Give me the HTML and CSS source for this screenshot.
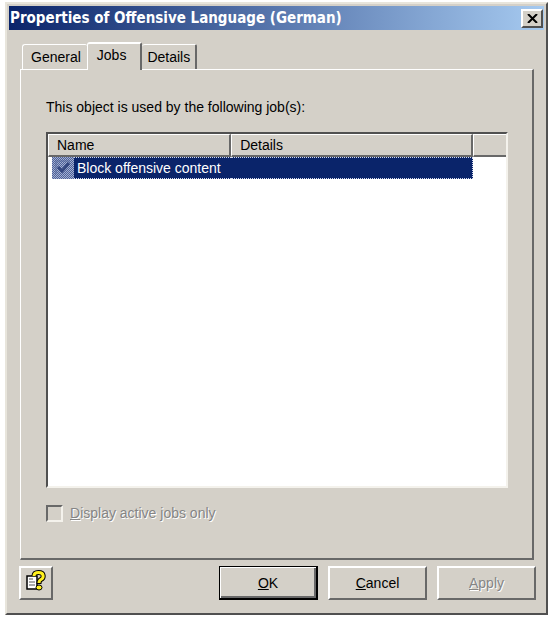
FILE: index.html
```
<!DOCTYPE html>
<html lang="en">
<head>
    <meta charset="UTF-8">
    <meta name="viewport" content="width=device-width, initial-scale=1.0">
    <title>Properties of Offensive Language (German)</title>
    <link rel="stylesheet" href="styles.css">
</head>
<body>
    <div class="window">
        <div class="titlebar">
            <h1>Properties of Offensive Language (German)</h1>
            <button class="close" aria-label="Close">
                <svg width="11" height="9" viewBox="0 0 11 9"><path d="M1 0L10 9M10 0L1 9" stroke="#000" stroke-width="2"/></svg>
            </button>
        </div>
        <div class="tabs" role="tablist">
            <button class="tab" role="tab">General</button>
            <button class="tab active" role="tab" aria-selected="true">Jobs</button>
            <button class="tab" role="tab">Details</button>
        </div>
        <div class="panel" role="tabpanel">
            <p>This object is used by the following job(s):</p>
            <div class="list">
                <table>
                    <colgroup>
                        <col class="col-name">
                        <col class="col-details">
                        <col class="col-rest">
                    </colgroup>
                    <thead>
                        <tr><th>Name</th><th>Details</th><th></th></tr>
                    </thead>
                    <tbody>
                        <tr class="selected">
                            <td>
                                <div class="item">
                                    <span class="item-icon">
                                        <svg width="22" height="22" viewBox="0 0 22 22">
                                            <defs>
                                                <pattern id="dither" width="2" height="2" patternUnits="userSpaceOnUse">
                                                    <rect width="2" height="2" fill="#a5b0cf"/>
                                                    <rect width="1" height="1" fill="#4c619b"/>
                                                    <rect x="1" y="1" width="1" height="1" fill="#4c619b"/>
                                                </pattern>
                                            </defs>
                                            <rect width="22" height="22" fill="url(#dither)"/>
                                            <path d="M4 17V4H18" fill="none" stroke="#5d6f9f" stroke-width="1"/>
                                            <path d="M6 10L10 14L17 6" fill="none" stroke="#34477f" stroke-width="3"/>
                                        </svg>
                                    </span>
                                    <span class="item-text">Block offensive content</span>
                                </div>
                            </td>
                            <td class="item-details"></td>
                            <td></td>
                        </tr>
                    </tbody>
                </table>
            </div>
            <div class="option">
                <input type="checkbox" id="activeOnly" disabled>
                <label for="activeOnly"><u>D</u>isplay active jobs only</label>
            </div>
        </div>
        <div class="footer">
            <button class="btn help" aria-label="Help">
                <svg width="20" height="22" viewBox="0 0 20 22">
                    <path d="M1 6H11V19H1Z" fill="#fff" stroke="#000" stroke-width="1.5"/>
                    <path d="M3 9H7M3 12H9M3 15H9" stroke="#555"/>
                    <path d="M8 6C8 3 10 2.5 12.500 2.500C18.500 2.500 18 8 15 9.500C13 10.500 13 12 13 14" fill="none" stroke="#000" stroke-width="5"/>
                    <path d="M8 6C8 3 10 2.500 12.500 2.500C18.500 2.500 18 8 15 9.500C13 10.500 13 11 13 13" fill="none" stroke="#fff01e" stroke-width="3"/>
                    <ellipse cx="13" cy="17.500" rx="3" ry="2.500" fill="#fff01e" stroke="#000"/>
                </svg>
            </button>
            <button class="btn default"><u>O</u>K</button>
            <button class="btn"><u>C</u>ancel</button>
            <button class="btn" disabled><u>A</u>pply</button>
        </div>
    </div>
</body>
</html>
```
FILE: styles.css
```
* {
    box-sizing: border-box;
}
body {
    margin: 0;
    padding: 2px 3px 2px 5px;
    background-color: #fff;
    color: #000;
    font: 14px/18px "Liberation Sans", Arial, sans-serif;
}
button {
    padding: 0;
    background-color: #d4d0c8;
    color: #000;
    font: inherit;
}
svg {
    display: block;
}
.window {
    display: flex;
    flex-direction: column;
    min-height: calc(100vh - 4px);
    padding: 2px;
    background-color: #d4d0c8;
    border: 2px solid;
    border-color: #e8e5dc #505050 #505050 #e8e5dc;
}
.titlebar {
    display: flex;
    align-items: center;
    justify-content: space-between;
    height: 24px;
    padding: 0 1px;
    background: linear-gradient(to right, #0a246a, #a6caf0);
}
.titlebar h1 {
    margin: 0;
    color: #fff;
    font: bold 15px/18px "DejaVu Sans Condensed", Tahoma, sans-serif;
    white-space: nowrap;
}
.close {
    display: flex;
    align-items: center;
    justify-content: center;
    width: 22px;
    height: 19px;
    border: 2px solid;
    border-color: #fff #505050 #505050 #fff;
}
.tabs {
    display: flex;
    align-items: flex-end;
    padding: 12px 13px 0;
}
.tab {
    height: 25px;
    padding: 0 6px;
    border: 1px solid #fff;
    border-bottom: 0;
    border-radius: 3px 2px 0 0;
}
.tab:first-child {
    padding: 0 6px 0 8px;
    border-right: 0;
}
.tab:last-child {
    padding: 0 5px;
    border-left: 0;
    border-right: 2px solid #686868;
}
.tab.active {
    height: 28px;
    margin-bottom: -1px;
    padding: 0 14px 4px 9px;
    border-width: 2px 2px 0 1px;
    border-right-color: #686868;
    position: relative;
}
.panel {
    flex: 1;
    display: flex;
    flex-direction: column;
    margin: 0 10px 0 11px;
    padding: 28px 24px 36px 25px;
    border: 1px solid #fff;
    border-right: 2px solid #686868;
    border-bottom: 2px solid #686868;
}
.panel p {
    margin: 0 0 16px;
}
.list {
    flex: 1;
    background-color: #fff;
    border: 2px solid;
    border-color: #505050 #f4f2ec #f4f2ec #505050;
}
table {
    width: 100%;
    border-collapse: separate;
    border-spacing: 0;
    table-layout: fixed;
}
.col-name {
    width: 40%;
}
.col-rest {
    width: 33px;
}
th {
    height: 23px;
    padding: 0 8px;
    background-color: #d4d0c8;
    border: solid;
    border-width: 1px 2px 2px 1px;
    border-color: #fff #686868 #686868 #fff;
    font-weight: normal;
    text-align: left;
}
th:last-child {
    border-right: 0;
}
td {
    height: 22px;
    padding: 0;
}
.item {
    display: flex;
    height: 22px;
    padding-left: 4px;
}
.item-text {
    flex: 1;
    padding-left: 3px;
    line-height: 20px;
    color: #fff;
    white-space: nowrap;
}
.item-text, .item-details {
    background-color: #0a246a;
    border-top: 1px dotted #d5dcf0;
    border-bottom: 1px dotted #d5dcf0;
}
.item-details {
    border-right: 1px dotted #d5dcf0;
}
.option {
    display: flex;
    align-items: center;
    gap: 7px;
    margin-top: 16px;
    color: #858585;
    text-shadow: 1px 1px #fff;
}
.option input {
    appearance: none;
    width: 17px;
    height: 17px;
    margin: 0;
    border: 2px solid;
    border-color: #686868 #f4f2ec #f4f2ec #686868;
}
.footer {
    display: flex;
    gap: 10px;
    padding: 6px 8px 11px 10px;
}
.btn {
    width: 99px;
    height: 34px;
    border: 2px solid;
    border-color: #fff #686868 #686868 #fff;
}
.help {
    display: flex;
    align-items: flex-start;
    justify-content: center;
    width: 34px;
    margin-right: auto;
    padding-top: 2px;
}
.default {
    border-color: #000;
    border-width: 1px 2px 2px 1px;
    box-shadow: inset 1px 1px #fff, inset -2px -2px #686868;
}
.btn:disabled {
    color: #858585;
    text-shadow: 1px 1px #fff;
}
```
